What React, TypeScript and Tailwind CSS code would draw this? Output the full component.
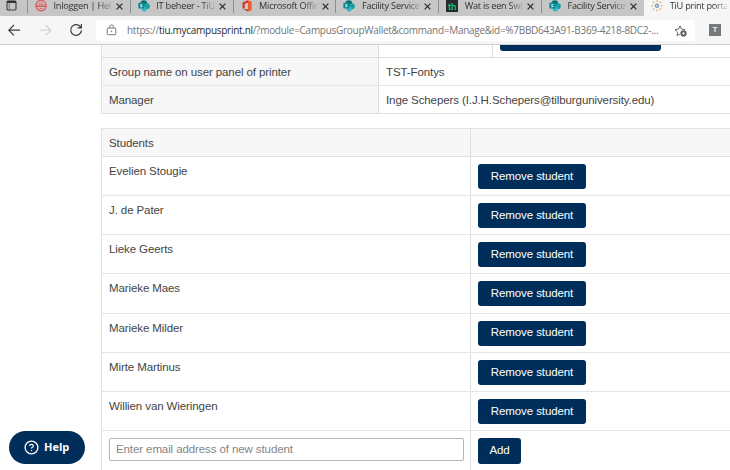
import type { ReactNode } from 'react';

const students = [
  'Evelien Stougie',
  'J. de Pater',
  'Lieke Geerts',
  'Marieke Maes',
  'Marieke Milder',
  'Mirte Martinus',
  'Willien van Wieringen',
];

function SharePointIcon() {
  return (
    <svg width="12" height="12" viewBox="0 0 12 12">
      <circle cx="5.8" cy="3.6" r="3.4" fill="#0b7078" />
      <circle cx="8.8" cy="6.2" r="3" fill="#1a9ba1" />
      <circle cx="6.2" cy="9" r="2.5" fill="#37b8c4" />
      <rect x="0.4" y="2.8" width="5.8" height="5.8" rx="0.6" fill="#05858d" />
      <path d="M4.4 4.5Q2.4 3.8 2.4 5T4.2 6.2 2.2 7" fill="none" stroke="#fff" strokeWidth="0.7" />
    </svg>
  );
}

function HelpdeskIcon() {
  return (
    <svg width="12" height="12" viewBox="0 0 12 12" fill="none" stroke="#e0575a">
      <circle cx="6" cy="5.6" r="5.2" strokeWidth="1.2" />
      <path d="M1 5h10M1 6.5h10" strokeWidth="1.1" />
      <path d="M4 3h4M4.2 8.2q1.8 1.2 3.6 0" strokeWidth="0.8" />
    </svg>
  );
}

function OfficeIcon() {
  return (
    <svg width="12" height="12" viewBox="0 0 12 12">
      <path d="M7 0.2L1.6 2.4v6.4L3.6 8V3.7L7 2.6z" fill="#d02f1c" />
      <path d="M7 0.2l3.6 1.2v8.8L7 11.4z" fill="#ef5a33" />
      <path d="M1.6 8.8L7 9.4v2z" fill="#c92a1a" />
    </svg>
  );
}

function ThIcon() {
  return (
    <span className="flex h-3 w-3 items-center justify-center bg-[#242b2c] font-['Inter',sans-serif] text-[9px] leading-none font-semibold text-[#1fc477]">
      th
    </span>
  );
}

function SunIcon() {
  return (
    <svg width="12" height="12" viewBox="0 0 12 12">
      <circle cx="6" cy="5.8" r="2.2" fill="#7f9bb8" />
      <path
        d="M6 .2v1.8M6 9.6v1.8M.3 5.8h1.9M9.8 5.8h1.9M2 1.8l1.3 1.3M8.7 8.5L10 9.8M2 9.8l1.3-1.3M8.7 3.1L10 1.8"
        stroke="#dcb565"
        strokeWidth="1.3"
      />
      <circle cx="6" cy="5.8" r="0.9" fill="#e8edf2" />
    </svg>
  );
}

function CloseIcon() {
  return (
    <svg width="7" height="7" viewBox="0 0 7 7" className="shrink-0">
      <path d="M.6 .6l5.8 5.8M6.4 .6L.6 6.4" stroke="#2b2b2b" strokeWidth="1.2" />
    </svg>
  );
}

function Tab({ icon, title }: { icon: ReactNode; title: string }) {
  return (
    <div className="flex h-[13px] w-[102.8px] shrink-0 items-start border-l border-[#8e8e8e] pl-[7px]">
      <span className="w-3 shrink-0">{icon}</span>
      <span className="ml-[6.5px] w-[57.5px] shrink-0 bg-[linear-gradient(90deg,#2b2b2b_78%,#a8a8a8_100%)] bg-clip-text leading-[12px] tracking-[-0.25px] whitespace-nowrap text-transparent">
        {title}
      </span>
      <span className="mt-[2.5px] ml-[5px] flex">
        <CloseIcon />
      </span>
    </div>
  );
}

function TabStrip() {
  return (
    <div className="flex h-4 bg-[#c6c6c6] font-['Open_Sans',sans-serif] text-[9.2px] text-[#333]">
      <div className="w-[27px] shrink-0 pl-[6px]">
        <svg width="11" height="11" viewBox="0 0 11 11">
          <rect x="1" y="1" width="9" height="9" rx="1.2" fill="none" stroke="#3c3c3c" strokeWidth="1.1" />
          <path d="M1 1.9h9" stroke="#2b2b2b" strokeWidth="2" />
          <path d="M3.2 3v7" stroke="#555" strokeWidth="0.7" />
        </svg>
      </div>
      <Tab icon={<HelpdeskIcon />} title="Inloggen | Help" />
      <Tab icon={<SharePointIcon />} title="IT beheer - TiU" />
      <Tab icon={<OfficeIcon />} title="Microsoft Offic" />
      <Tab icon={<SharePointIcon />} title="Facility Service" />
      <Tab icon={<ThIcon />} title="Wat is een Swi" />
      <Tab icon={<SharePointIcon />} title="Facility Service" />
      <div className="flex h-4 grow items-start bg-[#f6f6f6] pl-[7px]">
        <span className="w-3 shrink-0">
          <SunIcon />
        </span>
        <span className="ml-[7px] w-[57px] bg-[linear-gradient(90deg,#2b2b2b_78%,#ccc_100%)] bg-clip-text leading-[12px] tracking-[-0.28px] whitespace-nowrap text-transparent">
          TiU print porta
        </span>
      </div>
    </div>
  );
}

function Toolbar() {
  return (
    <div className="flex h-[29px] items-center border-b border-[#cfcfcf] bg-[#f6f6f6]">
      <svg width="96" height="28" viewBox="0 0 96 28" fill="none" className="shrink-0">
        <path d="M20 14.2H9M14 9l-5.2 5.2L14 19.4" stroke="#3c3c3c" strokeWidth="1.2" />
        <path d="M40 14.2h10.8M45.6 9l5.2 5.2-5.2 5.2" stroke="#d2d2d2" strokeWidth="1.2" />
        <path d="M80.9 11.5a5.4 5.4 0 1 0 .6 2.7M81.4 8v3.8h-4" stroke="#3c3c3c" strokeWidth="1.2" />
      </svg>
      <div className="flex h-[21px] w-[599px] shrink-0 items-center rounded-[3px] bg-white pl-[10px]">
        <svg width="11" height="12" viewBox="0 0 11 12" fill="none" stroke="#777" className="shrink-0">
          <rect x="1.2" y="4" width="8.6" height="6.7" rx="1" />
          <path d="M3.6 4V2.7q0-1.7 1.9-1.7t1.9 1.7V4" />
          <circle cx="5.5" cy="7.4" r="0.4" fill="#666" />
        </svg>
        <div className="ml-[10px] w-[548px] font-['Open_Sans',sans-serif] text-[10px] leading-4 tracking-[-0.28px] whitespace-nowrap text-[#757575]">
          https://<span className="text-[#2b2b2b]">tiu.mycampusprint.nl</span>
          /?module=CampusGroupWallet&amp;command=Manage&amp;id=%7BBD643A91-B369-4218-8DC2-...
        </div>
        <svg width="13" height="13" viewBox="0 0 13 13" fill="none" className="-ml-px shrink-0">
          <path
            d="M6 10L3 11.6l.6-3.5L1 5.6l3.5-.5L6 1.8l1.6 3.3 3.5.5"
            stroke="#6a6a6a"
            strokeWidth="1"
            strokeLinejoin="round"
          />
          <circle cx="9.5" cy="9.4" r="3.1" fill="#5c5c5c" />
          <path d="M9.5 7.9v3M8 9.4h3" stroke="#fff" strokeWidth="0.8" />
        </svg>
      </div>
      <div className="ml-[14px] flex h-3 w-3 items-center justify-center bg-[#777] font-['Liberation_Sans',sans-serif] text-[8px] leading-none font-bold tracking-normal text-[#eee]">
        T
      </div>
    </div>
  );
}

function GroupTable() {
  return (
    <div className="border-b border-l border-[#e0e0e0]">
      <div className="flex h-[13px] border-b border-[#dedede]">
        <div className="w-[277px] shrink-0 border-r border-[#dedede] bg-[#f7f7f7]" />
        <div className="w-[114px] shrink-0 border-r border-[#dedede]" />
        <div className="ml-[7px] h-[6px] w-[161px] rounded-b-[3px] bg-[#002e5b]" />
      </div>
      <div className="flex h-7 border-b border-[#e6e6e6] leading-[29px]">
        <div className="w-[277px] shrink-0 border-r border-[#dedede] bg-[#f7f7f7] pl-[7px]">
          Group name on user panel of printer
        </div>
        <div className="pl-[7px]">TST-Fontys</div>
      </div>
      <div className="flex h-[27px] leading-[28px]">
        <div className="w-[277px] shrink-0 border-r border-[#dedede] bg-[#f7f7f7] pl-[7px]">Manager</div>
        <div className="pl-[7px]">Inge Schepers (I.J.H.Schepers@tilburguniversity.edu)</div>
      </div>
    </div>
  );
}

function StudentsTable() {
  return (
    <div className="mt-[14px] border-t border-l border-[#e2e2e2]">
      <div className="flex h-7 border-b border-[#e0e0e0] bg-[#f7f7f7] leading-[28px]">
        <div className="w-[369px] shrink-0 border-r border-[#dedede] pl-[7px]">Students</div>
      </div>
      {students.map((name) => (
        <div key={name} className="flex h-[39.15px] border-b border-[#e6e6e6]">
          <div className="w-[369px] shrink-0 border-r border-[#dedede] pt-[6px] pl-[7px] leading-4">{name}</div>
          <button className="mt-[7px] ml-[7px] h-[25px] w-[108px] rounded-[3px] bg-[#002e5b] tracking-[-0.1px] text-white">
            Remove student
          </button>
        </div>
      ))}
      <div className="flex h-[44px]">
        <div className="w-[369px] shrink-0 border-r border-[#dedede] pt-[7px] pl-[7px]">
          <input
            className="block h-[23px] w-[355px] rounded-[2px] border border-[#b5b5b5] bg-white px-[6px] tracking-[-0.1px] placeholder:text-[#858585]"
            placeholder="Enter email address of new student"
          />
        </div>
        <button className="mt-[7px] ml-[7px] h-[26px] w-[43px] rounded-[3px] bg-[#002e5b] text-white">Add</button>
      </div>
    </div>
  );
}

export default function App() {
  return (
    <div className="relative h-[470px] w-[730px] overflow-hidden bg-white font-['Liberation_Sans',Arial,sans-serif] text-[11.5px] tracking-[-0.1px] text-[#444]">
      <TabStrip />
      <Toolbar />
      <main className="ml-[101px]">
        <GroupTable />
        <StudentsTable />
      </main>
      <button className="absolute top-[431px] left-[9px] flex h-[33px] w-[76px] items-center rounded-full bg-[#002e5b] pl-[15px] font-['Open_Sans',sans-serif] text-[11px] font-bold tracking-normal text-white">
        <svg width="15" height="15" viewBox="0 0 15 15" fill="none" stroke="#fff">
          <circle cx="7.5" cy="7.5" r="6.4" strokeWidth="1.3" />
          <path d="M5.6 6.1q0-1.8 1.9-1.8t1.9 1.6q0 .9-1 1.4t-.9 1.2" strokeWidth="1.2" />
          <circle cx="7.5" cy="10.5" r="0.4" fill="#fff" strokeWidth="0.6" />
        </svg>
        <span className="ml-[5px]">Help</span>
      </button>
    </div>
  );
}
